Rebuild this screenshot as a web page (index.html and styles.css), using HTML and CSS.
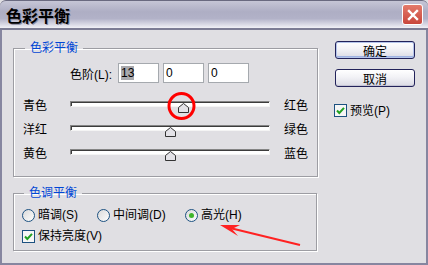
FILE: index.html
```html
<!DOCTYPE html>
<html lang="zh-CN">

<head>
    <meta charset="UTF-8">
    <meta name="viewport" content="width=device-width, initial-scale=1.0">
    <title>色彩平衡</title>
    <link rel="stylesheet" href="styles.css">
</head>

<body>

    <div class="window">
        <div class="titlebar">
            <span class="title">色彩平衡</span>
            <span class="close">
                <svg width="18" height="18" viewBox="0 0 18 18">
                    <path d="M5 5 L13 13 M13 5 L5 13" stroke="#fff" stroke-width="2.4" stroke-linecap="square" />
                </svg>
            </span>
        </div>

        <div class="client">
            <div class="main">
                <fieldset class="group balance">
                    <legend>色彩平衡</legend>
                    <div class="levels">
                        <span class="levels-label">色阶(L):</span>
                        <div class="field"><span class="sel">13</span></div>
                        <div class="field">0</div>
                        <div class="field">0</div>
                    </div>
                    <div class="slider-row">
                        <span>青色</span>
                        <div class="track">
                            <svg class="thumb" style="left: 56.5%" width="11" height="10" viewBox="0 0 11 10">
                                <path d="M0.5 9.5 V4.5 L5.5 0.5 L10.5 4.5 V9.5 Z" fill="#e4e3e8" stroke="#333" />
                            </svg>
                        </div>
                        <span class="right-label">红色</span>
                    </div>
                    <div class="slider-row">
                        <span>洋红</span>
                        <div class="track">
                            <svg class="thumb" style="left: 50%" width="11" height="10" viewBox="0 0 11 10">
                                <path d="M0.5 9.5 V4.5 L5.5 0.5 L10.5 4.5 V9.5 Z" fill="#e4e3e8" stroke="#333" />
                            </svg>
                        </div>
                        <span class="right-label">绿色</span>
                    </div>
                    <div class="slider-row">
                        <span>黄色</span>
                        <div class="track">
                            <svg class="thumb" style="left: 50%" width="11" height="10" viewBox="0 0 11 10">
                                <path d="M0.5 9.5 V4.5 L5.5 0.5 L10.5 4.5 V9.5 Z" fill="#e4e3e8" stroke="#333" />
                            </svg>
                        </div>
                        <span class="right-label">蓝色</span>
                    </div>
                </fieldset>

                <fieldset class="group tone">
                    <legend>色调平衡</legend>
                    <div class="radios">
                        <span class="option">
                            <svg width="13" height="13" viewBox="0 0 13 13">
                                <circle cx="6.5" cy="6.5" r="6" fill="url(#radioFill)" stroke="#1c5180" />
                            </svg>
                            暗调(S)
                        </span>
                        <span class="option">
                            <svg width="13" height="13" viewBox="0 0 13 13">
                                <circle cx="6.5" cy="6.5" r="6" fill="url(#radioFill)" stroke="#1c5180" />
                            </svg>
                            中间调(D)
                        </span>
                        <span class="option">
                            <svg width="13" height="13" viewBox="0 0 13 13">
                                <circle cx="6.5" cy="6.5" r="6" fill="url(#radioFill)" stroke="#1c5180" />
                                <circle cx="6.5" cy="6.5" r="2.5" fill="#3fb52a" />
                            </svg>
                            高光(H)
                        </span>
                    </div>
                    <div class="option check-row">
                        <svg width="13" height="13" viewBox="0 0 13 13">
                            <rect x="0.5" y="0.5" width="12" height="12" fill="#f6f6f6" stroke="#1c5180" />
                            <path d="M3 6.5 L5.3 9 L10 3.8" fill="none" stroke="#21a121" stroke-width="2" />
                        </svg>
                        保持亮度(V)
                    </div>
                </fieldset>
            </div>

            <div class="side">
                <button class="btn default">确定</button>
                <button class="btn">取消</button>
                <div class="option preview">
                    <svg width="13" height="13" viewBox="0 0 13 13">
                        <rect x="0.5" y="0.5" width="12" height="12" fill="#f6f6f6" stroke="#1c5180" />
                        <path d="M3 6.5 L5.3 9 L10 3.8" fill="none" stroke="#21a121" stroke-width="2" />
                    </svg>
                    预览(P)
                </div>
            </div>
        </div>

        <!-- annotation marks drawn over the dialog -->
        <svg class="marks" width="428" height="265" viewBox="0 0 428 265">
            <defs>
                <linearGradient id="radioFill" x1="0" y1="0" x2="1" y2="1">
                    <stop offset="0" stop-color="#d8d8d8" />
                    <stop offset="1" stop-color="#ffffff" />
                </linearGradient>
            </defs>
            <circle cx="181.5" cy="106" r="12.5" fill="none" stroke="#f00" stroke-width="3" />
            <line x1="300" y1="245" x2="230" y2="228" stroke="#f22" stroke-width="2" />
            <path d="M220 225 L238 236 L232 229 L240 225 Z" fill="#f22" />
        </svg>
    </div>

</body>

</html>
```

FILE: styles.css
```css
body {
    margin: 0;
    font-family: "Liberation Sans", "Noto Sans CJK SC", sans-serif;
    font-size: 12px;
}

.window {
    position: relative;
    width: 428px;
    height: 265px;
    background: #e0dfe3;
    overflow: hidden;
}

.titlebar {
    height: 30px;
    box-sizing: border-box;
    display: flex;
    align-items: center;
    justify-content: space-between;
    border-top: 1px solid #6a6a80;
    border-bottom: 2px solid #7c7c94;
    border-radius: 6px 6px 0 0;
    background: linear-gradient(#c6c6d6 0%, #aeaec4 40%, #b2b2c8 65%, #f0f0f6 100%);
}

.title {
    padding-left: 6px;
    font-family: "Noto Sans CJK SC", sans-serif;
    font-weight: bold;
    font-size: 16px;
    line-height: 18px;
    color: #000;
    text-shadow: 1px 1px 0 #8e8ea2;
}

.close {
    width: 19px;
    height: 19px;
    margin-right: 5px;
    border: 1px solid #fff;
    border-radius: 3px;
    background: linear-gradient(#e47a6a, #c8463c);
    display: flex;
    align-items: center;
    justify-content: center;
}

.client {
    display: flex;
    height: 235px;
    box-sizing: border-box;
    padding: 11px 0 0 11px;
    border: 2px solid #8686a0;
    border-top: none;
}

.main {
    width: 304px;
    flex-shrink: 0;
}

.group {
    margin: 0;
    border: 1px solid #9d9da3;
    box-shadow: 1px 1px 0 #fff, inset 1px 1px 0 #fff;
}

.group legend {
    margin-left: 2px;
    padding: 0 5px;
    line-height: 14px;
    color: #0046d5;
}

.balance {
    padding: 8px 9px 12px;
}

.levels {
    display: flex;
    align-items: center;
    gap: 4px;
    height: 20px;
    margin-left: 47px;
}

.levels-label {
    width: 44px;
    white-space: nowrap;
}

.field {
    width: 41px;
    height: 20px;
    box-sizing: border-box;
    border: 1px solid #a5a9ae;
    background: #fff;
    padding-left: 2px;
    line-height: 18px;
}

.sel {
    display: inline-block;
    background: #a9a9ad;
    line-height: 14px;
}

.slider-row {
    display: grid;
    grid-template-columns: 47px 200px 1fr;
    align-items: center;
    height: 24px;
    white-space: nowrap;
}

.levels + .slider-row {
    margin-top: 9px;
}

.track {
    position: relative;
    height: 6px;
    box-sizing: border-box;
    border: 1px solid;
    border-color: #858585 #f4f4f4 #f4f4f4 #858585;
    box-shadow: inset 1px 1px 0 #3c3c3c;
    background: #fff;
}

.thumb {
    position: absolute;
    top: 1px;
    margin-left: -5px;
}

.right-label {
    margin-left: 14px;
}

.tone {
    margin-top: 9px;
    padding: 8px 8px 7px;
}

.radios {
    display: grid;
    grid-template-columns: 75px 88px auto;
    height: 14px;
}

.option {
    display: flex;
    align-items: center;
    gap: 3px;
    height: 14px;
    line-height: 14px;
    white-space: nowrap;
}

.check-row {
    margin-top: 7px;
}

.side {
    display: flex;
    flex-direction: column;
    margin-left: 18px;
}

.btn {
    width: 80px;
    height: 18px;
    padding: 0;
    font: inherit;
    color: #000;
    border: 1px solid #22225a;
    border-radius: 3px;
    background: linear-gradient(#ffffff, #f2f2f6 45%, #dadae4);
    box-shadow: inset 0 -1px 0 #c4c4d4;
}

.btn.default {
    box-shadow: inset 0 0 0 1px #b4c4ea, inset 0 -2px 0 #9fb2e2;
}

.btn + .btn {
    margin-top: 10px;
}

.preview {
    margin-top: 17px;
    margin-left: -1px;
    height: 13px;
}

.marks {
    position: absolute;
    top: 0;
    left: 0;
    pointer-events: none;
}
```
